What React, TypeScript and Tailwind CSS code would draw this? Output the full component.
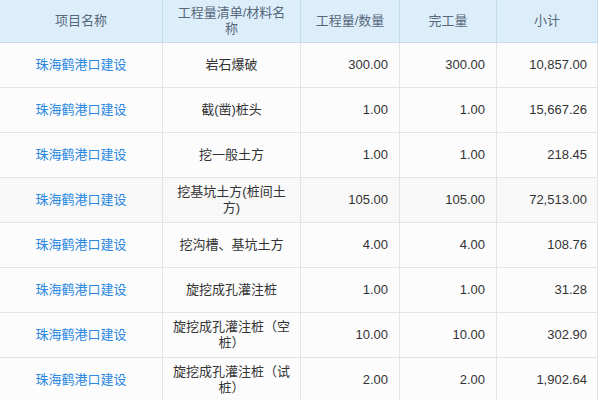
const rows = [
  { item: "岩石爆破", qty: "300.00", done: "300.00", total: "10,857.00" },
  { item: "截(凿)桩头", qty: "1.00", done: "1.00", total: "15,667.26" },
  { item: "挖一般土方", qty: "1.00", done: "1.00", total: "218.45" },
  { item: "挖基坑土方(桩间土方)", qty: "105.00", done: "105.00", total: "72,513.00", hover: true },
  { item: "挖沟槽、基坑土方", qty: "4.00", done: "4.00", total: "108.76" },
  { item: "旋挖成孔灌注桩", qty: "1.00", done: "1.00", total: "31.28" },
  { item: "旋挖成孔灌注桩（空桩）", qty: "10.00", done: "10.00", total: "302.90" },
  { item: "旋挖成孔灌注桩（试桩）", qty: "2.00", done: "2.00", total: "1,902.64" },
];

export default function App() {
  return (
    <div
      className="w-[599px] h-[400px] overflow-hidden bg-white text-[13px] leading-[16px]"
      style={{ fontFamily: '"Liberation Sans", "Noto Sans CJK SC", sans-serif' }}
    >
      <div className="w-[598px]">
        <div className="flex h-[43px] bg-[#ddeefb] border-b border-[#c6ddf1] text-[#56677a]">
          <div className="w-[163px] flex items-center justify-center border-r border-[#c6ddf1] px-[9px] text-center">
            项目名称
          </div>
          <div className="w-[138px] flex items-center justify-center border-r border-[#c6ddf1] px-[9px] text-center">
            工程量清单/材料名称
          </div>
          <div className="w-[99px] flex items-center justify-center border-r border-[#c6ddf1] px-[9px] text-center">
            工程量/数量
          </div>
          <div className="w-[97px] flex items-center justify-center border-r border-[#c6ddf1] px-[9px] text-center">
            完工量
          </div>
          <div className="w-[101px] flex items-center justify-center border-r border-[#c6ddf1] px-[9px] text-center">
            小计
          </div>
        </div>
        {rows.map((r, i) => (
          <div
            key={i}
            className={
              "flex h-[45px] border-b border-[#e4e4e4] text-[#333] " +
              (r.hover ? "bg-[#f8f8f8]" : "bg-[#fcfcfd]")
            }
          >
            <div className="w-[163px] flex items-center justify-center border-r border-[#e4e4e4] px-[9px] text-[#2a88e0]">
              珠海鹤港口建设
            </div>
            <div className="w-[138px] flex items-center justify-center border-r border-[#e4e4e4] px-[9px] text-center">
              {r.item}
            </div>
            <div className="w-[99px] flex items-center justify-end border-r border-[#e4e4e4] pr-[11px]">
              {r.qty}
            </div>
            <div className="w-[97px] flex items-center justify-end border-r border-[#e4e4e4] pr-[11px]">
              {r.done}
            </div>
            <div className="w-[101px] flex items-center justify-end border-r border-[#e4e4e4] pr-[10px]">
              {r.total}
            </div>
          </div>
        ))}
      </div>
    </div>
  );
}
